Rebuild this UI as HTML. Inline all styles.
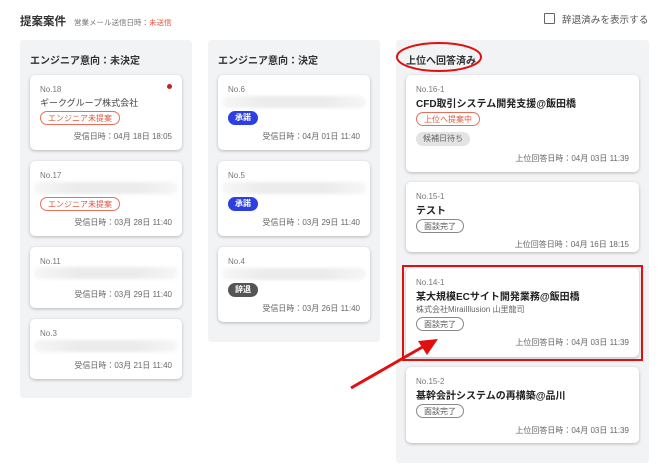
<!DOCTYPE html>
<html><head><meta charset="utf-8"><style>
*{margin:0;padding:0;box-sizing:border-box}
body{width:670px;height:466px;background:#fff;font-family:"Liberation Sans","Noto Sans CJK JP",sans-serif;position:relative;overflow:hidden;color:#333}
.a{position:absolute}
.col{position:absolute;background:#f2f3f5;border-radius:3px}
.ch{position:absolute;font-size:10px;font-weight:bold;color:#333}
.card{position:absolute;background:#fff;border-radius:5px;box-shadow:0 1px 3px rgba(0,0,0,.25)}
.no{position:absolute;left:10px;top:10px;font-size:8px;color:#777}
.blur{position:absolute;left:4px;right:4px;height:12px;background:linear-gradient(90deg,#f6f6f6,#ebebeb 30%,#ebebeb 70%,#f6f6f6);border-radius:6px;filter:blur(1.5px)}
.dt{position:absolute;right:10px;font-size:8px;color:#666}
.tg{position:absolute;left:10px;font-size:8px;border-radius:8px;padding:0 7px;height:14px;line-height:13px;white-space:nowrap}
.or{border:1px solid #e8705a;color:#e0553e}
.gr{border:1px solid #888;color:#555}
.bl{background:#2d3fe0;color:#fff;font-weight:bold;line-height:14px}
.dk{background:#555;color:#fff;font-weight:bold;line-height:14px}
.gy{background:#e3e3e3;color:#666;line-height:14px}
.tt{position:absolute;left:10px;font-size:10px;font-weight:bold;color:#222;white-space:nowrap}
</style></head><body>
<div class="a" style="left:20px;top:13px;font-size:11.5px;font-weight:bold;color:#333">提案案件</div>
<div class="a" style="left:74px;top:17px;font-size:7.5px;color:#777">営業メール送信日時：<span style="color:#e8553e">未送信</span></div>
<div class="a" style="left:544px;top:13px;width:11px;height:11px;border:1px solid #666;border-radius:1px"></div>
<div class="a" style="left:562px;top:12px;font-size:9.6px;color:#555">辞退済みを表示する</div>

<div class="col" style="left:20px;top:40px;width:172px;height:358px"></div>
<div class="ch" style="left:30px;top:52px">エンジニア意向：未決定</div>
<div class="card" style="left:30px;top:75px;width:152px;height:75px">
<div class="no">No.18</div><div class="a" style="right:10px;top:9px;width:5px;height:5px;border-radius:50%;background:#c62020"></div>
<div class="a" style="left:10px;top:21px;font-size:9px;color:#444">ギークグループ株式会社</div>
<div class="tg or" style="top:36px">エンジニア未提案</div>
<div class="dt" style="top:56px">受信日時：04月 18日 18:05</div></div>
<div class="card" style="left:30px;top:161px;width:152px;height:75px">
<div class="no">No.17</div><div class="blur" style="top:21px"></div>
<div class="tg or" style="top:36px">エンジニア未提案</div>
<div class="dt" style="top:56px">受信日時：03月 28日 11:40</div></div>
<div class="card" style="left:30px;top:247px;width:152px;height:61px">
<div class="no">No.11</div><div class="blur" style="top:20px"></div>
<div class="dt" style="top:42px">受信日時：03月 29日 11:40</div></div>
<div class="card" style="left:30px;top:319px;width:152px;height:60px">
<div class="no">No.3</div><div class="blur" style="top:21px"></div>
<div class="dt" style="top:41px">受信日時：03月 21日 11:40</div></div>

<div class="col" style="left:208px;top:40px;width:172px;height:302px"></div>
<div class="ch" style="left:218px;top:52px">エンジニア意向：決定</div>
<div class="card" style="left:218px;top:75px;width:152px;height:75px">
<div class="no">No.6</div><div class="blur" style="top:21px"></div>
<div class="tg bl" style="top:36px">承諾</div>
<div class="dt" style="top:56px">受信日時：04月 01日 11:40</div></div>
<div class="card" style="left:218px;top:161px;width:152px;height:75px">
<div class="no">No.5</div><div class="blur" style="top:21px"></div>
<div class="tg bl" style="top:36px">承諾</div>
<div class="dt" style="top:56px">受信日時：03月 29日 11:40</div></div>
<div class="card" style="left:218px;top:247px;width:152px;height:75px">
<div class="no">No.4</div><div class="blur" style="top:21px"></div>
<div class="tg dk" style="top:36px">辞退</div>
<div class="dt" style="top:56px">受信日時：03月 26日 11:40</div></div>

<div class="col" style="left:396px;top:40px;width:253px;height:423px"></div>
<div class="ch" style="left:406px;top:52px">上位へ回答済み</div>
<div class="card" style="left:406px;top:75px;width:233px;height:97px">
<div class="no">No.16-1</div><div class="tt" style="top:20px">CFD取引システム開発支援@飯田橋</div>
<div class="tg or" style="top:37px">上位へ提案中</div>
<div class="tg gy" style="top:57px">候補日待ち</div>
<div class="dt" style="top:78px">上位回答日時：04月 03日 11:39</div></div>
<div class="card" style="left:406px;top:182px;width:233px;height:70px">
<div class="no">No.15-1</div><div class="tt" style="top:20px">テスト</div>
<div class="tg gr" style="top:37px">面談完了</div>
<div class="dt" style="top:57px">上位回答日時：04月 16日 18:15</div></div>
<div class="card" style="left:406px;top:268px;width:233px;height:89px">
<div class="no">No.14-1</div><div class="tt" style="top:20px">某大規模ECサイト開発業務@飯田橋</div>
<div class="a" style="left:10px;top:36px;font-size:8px;color:#666">株式会社MiraiIllusion 山里龍司</div>
<div class="tg gr" style="top:49px">面談完了</div>
<div class="dt" style="top:69px">上位回答日時：04月 03日 11:39</div></div>
<div class="card" style="left:406px;top:367px;width:233px;height:76px">
<div class="no">No.15-2</div><div class="tt" style="top:20px">基幹会計システムの再構築@品川</div>
<div class="tg gr" style="top:37px">面談完了</div>
<div class="dt" style="top:58px">上位回答日時：04月 03日 11:39</div></div>

<svg class="a" style="left:0;top:0" width="670" height="466">
<ellipse cx="439" cy="57" rx="42" ry="14" fill="none" stroke="#e01010" stroke-width="2"/>
<rect x="403" y="266" width="239" height="94" fill="none" stroke="#e01010" stroke-width="2"/>
<line x1="351" y1="388" x2="426" y2="345" stroke="#e01010" stroke-width="3"/>
<polygon points="438,339 418,341 427,355" fill="#e01010"/>
</svg>
</body></html>
